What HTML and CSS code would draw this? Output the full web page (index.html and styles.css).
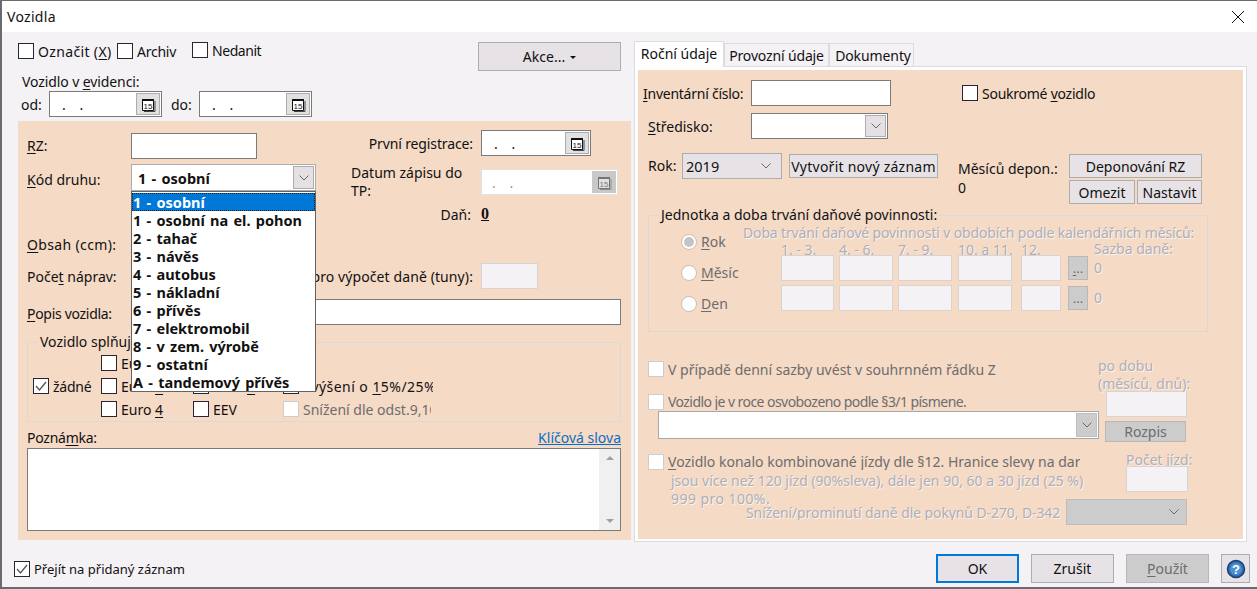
FILE: index.html
```html
<!DOCTYPE html>
<html lang="cs">
<head>
<meta charset="utf-8">
<title>Vozidla</title>
<link rel="stylesheet" href="styles.css">
</head>
<body>
<svg class="defs" width="0" height="0" aria-hidden="true">
  <symbol id="tick" viewBox="0 0 14 14"><path d="M2 7 L5.5 11 L12 3" fill="none" stroke="#555" stroke-width="1.3"/></symbol>
  <symbol id="chev" viewBox="0 0 12 8"><path d="M1.5 1.5 L6 6 L10.5 1.5" fill="none" stroke="#6a6a6a" stroke-width="1"/></symbol>
  <symbol id="cal" viewBox="0 0 15 15"><path d="M1.5 2.5H12.5V13.5H1.5Z" fill="#fff" stroke="#111"/><path d="M1 3H13" stroke="#111" stroke-width="2"/><path d="M14 4V14.5H3" fill="none" stroke="#444" stroke-width="1"/><text x="7" y="12" font-size="8" font-family="Liberation Sans" text-anchor="middle" fill="#111">15</text></symbol>
</svg>
<div class="window">
  <header class="titlebar">
    <span class="title">Vozidla</span>
    <svg class="close" viewBox="0 0 12 12" width="12" height="12"><path d="M0 0 L12 12 M12 0 L0 12" stroke="#111" stroke-width="1"/></svg>
  </header>
  <div class="main">
    <section class="left">
      <div class="flags">
        <label class="chk w-oz low"><span class="box"></span><span class="wide">Označit (<u>X</u>)</span></label>
        <label class="chk w-ar low"><span class="box"></span><span class="tight">Archiv</span></label>
        <label class="chk"><span class="box"></span><span class="tight2">Nedanit</span></label>
        <button class="btn akce">Akce... <span class="caret"></span></button>
      </div>
      <div class="evid-title">Vozidlo v <u>e</u>videnci:</div>
      <div class="evid">
        <span class="lab-od">od:</span>
        <div class="date d-113"><span class="dots">. .</span><span class="cal"><svg width="15" height="15"><use href="#cal"/></svg></span></div>
        <span class="lab-do">do:</span>
        <div class="date d-113"><span class="dots">. .</span><span class="cal"><svg width="15" height="15"><use href="#cal"/></svg></span></div>
      </div>

      <div class="panel">
        <div class="upper">
          <div class="col-a">
            <div class="row r-rz"><span class="lab lab-up"><u>R</u>Z:</span><div class="input i-126"></div></div>
            <div class="row r-kod"><span class="lab lab-down"><u>K</u>ód druhu:</span>
              <div class="select s-kod"><span class="sel-text">1 - osobní</span><span class="sel-btn"><svg width="12" height="8"><use href="#chev"/></svg></span></div>
            </div>
            <div class="row r-obsah"><span class="lab lab-up wide"><u>O</u>bsah (ccm):</span><div class="input i-126"></div></div>
            <div class="row r-pocet"><span class="lab">Poče<u>t</u> náprav:</span><div class="input i-126"></div></div>
          </div>
          <div class="col-b">
            <div class="row r-reg"><span class="lab-r slight">První registrace:</span>
              <div class="date d-110"><span class="dots">. .</span><span class="cal"><svg width="15" height="15"><use href="#cal"/></svg></span></div>
            </div>
            <div class="row r-tp"><span class="lab-tp">Datum zápisu do TP:</span>
              <div class="date d-137 off"><span class="dots">. .</span><span class="cal"><svg width="15" height="15"><use href="#cal"/></svg></span></div>
            </div>
            <div class="row r-dan"><span class="lab-dan">Daň:</span><span class="dan-val">0</span></div>
            <div class="row r-tuny"><span class="lab-r nowrap">Hmotnost pro výpočet daně (tuny):</span><div class="input i-57 off"></div></div>
          </div>
        </div>
        <div class="row r-popis"><span class="lab lab-down tight3"><u>P</u>opis vozidla:</span><div class="input i-490"></div></div>
        <div class="group g-euro">
          <div class="legend leg-euro">Vozidlo splňuje emisní limit:</div>
          <div class="euro-grid">
            <span></span>
            <label class="chk"><span class="box"></span><span>Euro 1</span></label>
            <label class="chk"><span class="box"></span><span>Euro 5</span></label>
            <span></span>
            <label class="chk"><span class="box"><svg width="14" height="14"><use href="#tick"/></svg></span><span class="tight">žádné</span></label>
            <label class="chk"><span class="box"></span><span>Euro <u>3</u></span></label>
            <label class="chk"><span class="box"></span><span>Euro <u>6</u></span></label>
            <label class="chk"><span class="box"></span><span class="clip w-133 stretch">Zvýšení o <u>1</u>5%/25%</span></label>
            <span></span>
            <label class="chk"><span class="box"></span><span>Euro <u>4</u></span></label>
            <label class="chk"><span class="box"></span><span>EEV</span></label>
            <label class="chk dis"><span class="box"></span><span class="clip w-128">Snížení dle odst.9,10</span></label>
          </div>
        </div>
        <div class="note-head"><span class="tight">Pozná<u>m</u>ka:</span><a class="link">Klíčová slova</a></div>
        <div class="textarea"><div class="scroll"><span class="arrow up"></span><span class="arrow down"></span></div></div>

        <ul class="droplist">
          <li class="cur">1 - osobní</li>
          <li>1 - osobní na el. pohon</li>
          <li>2 - tahač</li>
          <li>3 - návěs</li>
          <li>4 - autobus</li>
          <li>5 - nákladní</li>
          <li>6 - přívěs</li>
          <li>7 - elektromobil</li>
          <li>8 - v zem. výrobě</li>
          <li>9 - ostatní</li>
          <li>A - tandemový přívěs</li>
        </ul>
      </div>
    </section>

    <section class="right">
      <nav class="tabs">
        <span class="tab active">Roční údaje</span>
        <span class="tab t-prov">Provozní údaje</span>
        <span class="tab t-dok">Dokumenty</span>
      </nav>
      <div class="pane">
        <div class="pane-in">
          <div class="row r-inv"><span class="lab-inv tight"><u>I</u>nventární číslo:</span><div class="input i-140"></div>
            <label class="chk soukr"><span class="box"></span><span class="tight">Soukromé <u>v</u>ozidlo</span></label></div>
          <div class="row r-str"><span class="lab-str"><u>S</u>tředisko:</span>
            <div class="select s-str"><span class="sel-text"></span><span class="sel-btn"><svg width="12" height="8"><use href="#chev"/></svg></span></div></div>
          <div class="r-rok">
            <span class="lab-rok">Rok:</span>
            <div class="combo"><span class="year">2019</span><svg width="12" height="8"><use href="#chev"/></svg></div>
            <button class="btn b-new">Vytvořit nový záznam</button>
            <div class="depon">Měsíců depon.:<br>0</div>
            <div class="dep-btns">
              <button class="btn b-dep">Deponování RZ</button>
              <div class="dep-pair"><button class="btn b-om">Omezit</button><button class="btn b-na">Nastavit</button></div>
            </div>
          </div>
          <div class="group g-doba">
            <div class="legend leg-doba">Jednotka a doba trvání daňové povinnosti:</div>
            <div class="doba-body">
              <div class="radios">
                <label class="radio"><span class="circle on"></span><span><u>R</u>ok</span></label>
                <label class="radio"><span class="circle"></span><span><u>M</u>ěsíc</span></label>
                <label class="radio"><span class="circle"></span><span><u>D</u>en</span></label>
              </div>
              <div class="doba-table">
                <div class="etched doba-title">Doba trvání daňové povinnosti v obdobích podle kalendářních měsíců:</div>
                <div class="doba-grid">
                  <span class="etched hd">1. - 3.</span><span class="etched hd">4. - 6.</span><span class="etched hd">7. - 9.</span><span class="etched hd">10. a 11.</span><span class="etched hd">12.</span><span></span><span class="etched hd-s">Sazba daně:</span>
                  <div class="input off i-53"></div><div class="input off i-54"></div><div class="input off i-54"></div><div class="input off i-54"></div><div class="input off i-40"></div><button class="btn-off b-dots"><u>.</u>..</button><span class="etched val">0</span>
                  <div class="input off i-53"></div><div class="input off i-54"></div><div class="input off i-54"></div><div class="input off i-54"></div><div class="input off i-40"></div><button class="btn-off b-dots">...</button><span class="etched val">0</span>
                </div>
              </div>
            </div>
          </div>
          <div class="split">
            <div class="split-l">
              <label class="chk dis c-1"><span class="box"></span><span>V případě denní sazby uvést v souhrnném řádku Z</span></label>
              <label class="chk dis c-2"><span class="box"></span><span class="cut small">Vozidlo je v roce osvobozeno podle §3/1 písmene.</span></label>
              <div class="select s-osv"><span class="sel-text"></span><span class="sel-btn off"><svg width="12" height="8"><use href="#chev"/></svg></span></div>
              <label class="chk dis c-3"><span class="box"></span><span class="cut"><u>V</u>ozidlo konalo kombinované jízdy dle §12. Hranice slevy na dar</span></label>
              <div class="etched para">jsou více než 120 jízd (90%sleva), dále jen 90, 60 a 30 jízd (25 %)<br><span class="wide2">999 pro 100%.</span></div>
            </div>
            <div class="split-r">
              <div class="etched po-dobu">po dobu<br>(měsíců, dnů):</div>
              <div class="input off i-81"></div>
              <button class="btn-off b-rozpis">Rozpis</button>
              <div class="etched pocet">Počet jízd:</div>
              <div class="input off i-62"></div>
            </div>
          </div>
          <div class="r-sniz">
            <span class="etched sniz">Snížení/prominutí daně dle pokynů D-270, D-342</span>
            <div class="combo-off"><svg width="12" height="8"><use href="#chev"/></svg></div>
          </div>
        </div>
      </div>
    </section>
  </div>
  <footer class="footer">
    <label class="chk go"><span class="box"><svg width="14" height="14"><use href="#tick"/></svg></span><span class="go-text">Přejít na přidaný záznam</span></label>
    <div class="actions">
      <button class="btn fb ok">OK</button>
      <button class="btn fb">Zrušit</button>
      <button class="btn-off fb"><u>P</u>oužít</button>
      <button class="btn help"><svg width="20" height="20" viewBox="0 0 20 20"><circle cx="10" cy="10" r="8.5" fill="#2f6fb5" stroke="#1d3f70" stroke-width="1.5"/><circle cx="10" cy="10" r="6" fill="#4f8fd0"/><text x="10" y="14.5" text-anchor="middle" font-size="13" font-weight="700" font-family="Liberation Sans" fill="#fff">?</text></svg></button>
    </div>
  </footer>
</div>
</body>
</html>
```
FILE: styles.css
```css
* { box-sizing: border-box; }
html, body { margin: 0; padding: 0; }
body { width: 1257px; height: 589px; overflow: hidden; font-family: "Noto Sans", sans-serif; font-size: 14px; color: #111; background: #f5f2f6; }
.defs { position: absolute; }
button { font: inherit; color: inherit; padding: 0; cursor: default; }
ul { margin: 0; padding: 0; list-style: none; }
u { text-underline-offset: 2px; }

.wide { letter-spacing: .35px; }
.wide2 { letter-spacing: .45px; }
.slight { letter-spacing: -.12px; }
.tight { letter-spacing: -.25px; }
.tight2 { letter-spacing: -.45px; }
.tight3 { letter-spacing: -.3px; }
.small { letter-spacing: -.56px; }
.stretch { letter-spacing: .45px; }

.window { width: 1257px; height: 589px; border-top: 1px solid #6a6a70; border-left: 2px solid #6a6a70; border-bottom: 2px solid #6a6a70; display: flex; flex-direction: column; background: #f5f2f6; }
.titlebar { height: 31px; flex: none; background: #fff; display: flex; align-items: center; justify-content: space-between; padding: 0 13px 0 5px; }
.title { letter-spacing: .3px; }
.main { height: 510px; flex: none; display: flex; padding-left: 16px; gap: 3px; }
.footer { flex: 1; display: flex; padding: 12px 7px 0 12px; }

.row { display: flex; align-items: center; height: 26px; }
.input { height: 26px; background: #fff; border: 1px solid #7a7a7a; flex: none; }
.input.off { background: #f5f2f6; border-color: #d8d4d4; }
.btn { background: #e6e2e6; border: 1px solid #adadad; display: flex; align-items: center; justify-content: center; }
.btn-off { background: #cccccc; border: 1px solid #b8b8b8; color: #6d6d6d; display: flex; align-items: center; justify-content: center; }

.chk { display: flex; align-items: center; gap: 4px; height: 16px; white-space: nowrap; }
.box { width: 16px; height: 16px; flex: none; background: #fff; border: 1px solid #2b2433; display: flex; align-items: center; justify-content: center; }
.chk.dis { color: #6d6d6d; }
.chk.dis .box { border-color: #d0cccc; }
.clip { overflow: hidden; display: block; }
.w-133 { width: 133px; }
.w-128 { width: 128px; }
.cut { display: block; height: 16px; line-height: 16px; overflow: hidden; }

/* left head */
.left { width: 613px; flex: none; }
.flags { display: flex; height: 29px; margin-top: 10px; padding-right: 10px; }
.flags .low { margin-top: 1px; }
.w-oz { width: 99px; }
.w-ar { width: 75px; }
.akce { width: 143px; height: 29px; margin-left: auto; gap: 5px; }
.caret { width: 0; height: 0; border: 3px solid transparent; border-top-color: #111; border-bottom: 0; margin-top: 1px; }
.evid-title { height: 16px; line-height: 16px; margin: 3px 0 0 4px; letter-spacing: -.1px; }
.evid { display: flex; align-items: center; height: 26px; margin-top: 1px; padding-left: 3px; }
.lab-od { width: 28px; }
.lab-do { width: 28px; margin-left: 9px; }
.date { height: 26px; background: #fff; border: 1px solid #7a7a7a; display: flex; align-items: center; justify-content: space-between; flex: none; padding: 0 1px 0 12px; }
.date.off { border-color: #e4e0e0; color: #999; padding-left: 10px; }
.dots { word-spacing: 10px; font-size: 14px; }
.cal { width: 24px; height: 22px; background: #e1e1e1; border: 1px solid #adadad; display: flex; align-items: center; justify-content: center; }
.off .cal { background: #c8c8c8; border-color: #c8c8c8; }
.off .cal svg { opacity: .45; }
.d-113 { width: 113px; }
.d-110 { width: 110px; }
.d-137 { width: 137px; }

/* peach panel */
.panel { position: relative; height: 419px; margin-top: 4px; background: #f5dac6; padding: 0 10px 0 9px; }
.upper { display: flex; height: 178px; }
.col-a { width: 324px; flex: none; }
.lab { width: 104px; flex: none; }
.lab-up { padding-bottom: 2px; }
.lab-down { padding-top: 3px; }
.i-126 { width: 126px; }
.r-rz { margin-top: 12px; }
.r-kod { margin-top: 5px; height: 27px; }
.r-obsah { margin-top: 41px; }
.r-pocet { margin-top: 5px; }
.select { display: flex; align-items: stretch; background: #fff; border: 1px solid #7a7a7a; flex: none; padding: 1px; }
.sel-text { flex: 1; }
.sel-btn { width: 21px; background: #e4e0e4; border: 1px solid #adadad; display: flex; align-items: center; justify-content: center; }
.sel-btn.off { background: #cccccc; border-color: #c0c0c0; }
.s-kod { width: 185px; height: 27px; border-color: #adadad; }
.s-kod .sel-text { font-weight: 700; font-size: 14.5px; padding: 1px 0 0 5px; line-height: 23px; word-spacing: 1.5px; }
.col-b { flex: 1; }
.lab-r { width: 122px; margin-right: 8px; display: flex; justify-content: flex-end; flex: none; }
.nowrap { white-space: nowrap; letter-spacing: .1px; }
.r-reg { margin-top: 9px; }
.r-tp { margin-top: 13px; }
.lab-tp { width: 130px; padding-right: 8px; line-height: 18px; flex: none; }
.r-dan { margin-top: 10px; height: 18px; }
.lab-dan { width: 120px; margin-right: 10px; text-align: right; flex: none; }
.dan-val { font-family: "Liberation Serif", serif; font-weight: 700; font-size: 16px; text-decoration: underline; }
.r-tuny { margin-top: 40px; }
.i-57 { width: 57px; }
.i-490 { width: 490px; }
.group { border: 1px solid #dcd8d4; }
.legend { height: 16px; line-height: 16px; margin-top: -9px; background: #f5dac6; width: max-content; white-space: nowrap; padding: 0 2px; }
.g-euro { height: 80px; margin-top: 17px; }
.leg-euro { margin-left: 10px; }
.euro-grid { display: grid; grid-template-columns: 68px 92px 90px 150px; grid-auto-rows: 23px; margin: 5px 0 0 5px; }
.note-head { display: flex; justify-content: space-between; height: 16px; line-height: 16px; margin-top: 8px; }
.link { color: #0a6fc2; text-decoration: underline; }
.textarea { height: 83px; margin-top: 2px; background: #fff; border: 1px solid #7a7a7a; display: flex; justify-content: flex-end; }
.scroll { width: 21px; background: #f0f0f0; display: flex; flex-direction: column; justify-content: space-between; align-items: center; padding: 7px 0; }
.arrow { width: 0; height: 0; border: 4px solid transparent; }
.arrow.up { border-bottom-color: #a0a0a0; border-top: 0; }
.arrow.down { border-top-color: #a0a0a0; border-bottom: 0; }

.droplist { position: absolute; left: 113px; top: 70px; width: 185px; height: 201px; background: #fff; border: 1px solid #646464; padding-top: 1px; font-weight: 700; font-size: 14.5px; word-spacing: 1.5px; }
.droplist li { height: 18px; line-height: 18px; padding-left: 1px; white-space: nowrap; }
.droplist .cur { background: #0078d7; color: #fff; outline: 1px dotted #222; outline-offset: -1px; }

/* right */
.right { width: 613px; flex: none; padding-top: 9px; }
.tabs { display: flex; align-items: flex-end; height: 25px; }
.tab { height: 23px; line-height: 23px; background: #f5f2f6; border: 1px solid #dcdcdc; border-bottom: 0; text-align: center; }
.tab.active { width: 90px; height: 26px; background: #fff; margin-bottom: -1px; position: relative; line-height: 24px; }
.t-prov { width: 105px; letter-spacing: -.15px; }
.t-dok { width: 85px; padding-left: 3px; letter-spacing: -.1px; }
.pane { height: 476px; border: 1px solid #dcdcdc; background: #fff; padding: 3px 3px 2px; }
.pane-in { height: 100%; background: #f5dac6; overflow: hidden; }
.r-inv { margin-top: 10px; padding-left: 5px; }
.lab-inv { width: 108px; flex: none; }
.i-140 { width: 140px; }
.soukr { margin-left: 71px; }
.r-str { margin-top: 7px; padding-left: 10px; }
.lab-str { width: 103px; flex: none; }
.s-str { width: 137px; height: 26px; }
.r-rok { display: flex; margin-top: 14px; padding-left: 10px; height: 51px; }
.lab-rok { width: 34px; line-height: 26px; flex: none; }
.combo { width: 100px; height: 26px; background: #e6e2e6; border: 1px solid #adadad; display: flex; justify-content: space-between; align-items: center; padding: 0 9px 0 3px; flex: none; }
.year { font-size: 14.5px; }
.b-new { width: 149px; height: 24px; margin: 1px 0 0 7px; flex: none; white-space: nowrap; letter-spacing: .25px; }
.depon { width: 111px; margin: 6px 0 0 20px; line-height: 19px; flex: none; }
.dep-btns { width: 133px; flex: none; margin-top: 1px; }
.b-dep { width: 133px; height: 24px; }
.dep-pair { display: flex; justify-content: space-between; margin-top: 2px; }
.b-om { width: 66px; height: 24px; }
.b-na { width: 65px; height: 24px; }

.etched { color: #aeaeb6; text-shadow: 1px 1px 0 #faf5f2; white-space: nowrap; }
.g-doba { width: 560px; height: 117px; margin: 11px 0 0 10px; }
.leg-doba { margin-left: 10px; }
.doba-body { display: flex; }
.radios { width: 94px; padding: 3px 0 0 32px; flex: none; }
.radio { display: flex; align-items: center; gap: 4px; height: 31px; color: #6d6d6d; }
.circle { width: 16px; height: 16px; border-radius: 50%; background: #fff; border: 1px solid #d0bcae; display: flex; align-items: center; justify-content: center; flex: none; }
.circle.on::after { content: ""; width: 10px; height: 10px; border-radius: 50%; background: #c4c4c4; }
.doba-title { height: 16px; line-height: 16px; margin-top: 2px; letter-spacing: -.15px; }
.doba-grid { display: grid; grid-template-columns: 58px 59px 60px 63px 47px 26px 100px; grid-template-rows: 10px 26px 26px; row-gap: 4px; margin-left: 38px; }
.hd { display: block; height: 14px; line-height: 18px; overflow: hidden; }
.hd-s { line-height: 16px; height: 14px; }
.val { line-height: 26px; }
.i-53 { width: 53px; } .i-54 { width: 54px; } .i-40 { width: 40px; }
.b-dots { width: 20px; height: 24px; margin-top: 1px; font-size: 13px; }

.split { display: flex; margin-top: 25px; padding-left: 10px; height: 151px; }
.split-l { width: 450px; flex: none; }
.c-1 { margin-top: 4px; }
.c-2 { margin-top: 17px; }
.s-osv { width: 441px; height: 28px; margin: 1px 0 0 10px; border-color: #a8a8a8; }
.c-3 { margin-top: 15px; }
.para { margin: 2px 0 0 23px; line-height: 18px; }
.split-r { flex: none; }
.po-dobu { height: 34px; line-height: 18px; }
.i-81 { width: 81px; margin-left: 8px; }
.b-rozpis { width: 81px; height: 21px; margin: 4px 0 0 7px; }
.pocet { height: 14px; line-height: 16px; overflow: hidden; margin: 10px 0 0 28px; }
.i-62 { width: 62px; margin-left: 28px; }
.r-sniz { display: flex; margin-top: -9px; height: 26px; padding-left: 108px; }
.sniz { display: block; width: 320px; height: 15px; line-height: 16px; overflow: hidden; margin-top: 6px; flex: none; letter-spacing: -.1px; }
.combo-off { width: 121px; height: 26px; background: #cccccc; border: 1px solid #bdbdbd; display: flex; justify-content: flex-end; align-items: center; padding-right: 6px; }

/* footer */
.go { margin-top: 7px; }
.go-text { font-size: 13px; }
.actions { margin-left: auto; display: flex; gap: 12px; }
.fb { width: 83px; height: 29px; }
.ok { border: 2px solid #0078d7; }
.help { width: 29px; height: 29px; }
.close { flex: none; }
```
